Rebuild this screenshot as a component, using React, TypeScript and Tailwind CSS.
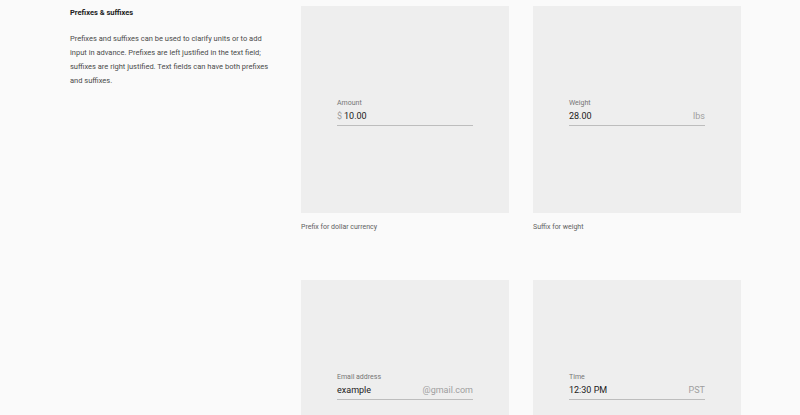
import React from "react";

type Field = {
  label: string;
  value: string;
  prefix?: string;
  suffix?: string;
  caption?: string;
};

const fields: Field[] = [
  { label: "Amount", value: "10.00", prefix: "$", caption: "Prefix for dollar currency" },
  { label: "Weight", value: "28.00", suffix: "lbs", caption: "Suffix for weight" },
  { label: "Email address", value: "example", suffix: "@gmail.com" },
  { label: "Time", value: "12:30 PM", suffix: "PST" },
];

function TextField({ field }: { field: Field }) {
  return (
    <div className="w-[136px]">
      <div className="text-[7px] leading-[8px] text-[#757575]">{field.label}</div>
      <div className="mt-[3px] flex items-baseline border-b border-[#bdbdbd] pb-[3px] text-[9px] leading-[12px]">
        {field.prefix && <span className="mr-[2px] text-[#9e9e9e]">{field.prefix}</span>}
        <span className="flex-1 text-[#212121]">{field.value}</span>
        {field.suffix && <span className="text-[#9e9e9e]">{field.suffix}</span>}
      </div>
    </div>
  );
}

export default function App() {
  return (
    <div
      className="min-h-[415px] bg-[#fafafa] pl-[70px] flex"
      style={{ fontFamily: "Roboto, 'Liberation Sans', sans-serif" }}
    >
      <div className="w-[200px] pt-[8px] mr-[31px]">
        <h3 className="text-[7.5px] font-bold leading-[10px] text-[#212121]">Prefixes &amp; suffixes</h3>
        <p className="mt-[14px] text-[7.5px] leading-[14px] text-[#4a4a4a]">
          Prefixes and suffixes can be used to clarify units or to add input in advance. Prefixes are left justified in the text field; suffixes are right justified. Text fields can have both prefixes and suffixes.
        </p>
      </div>
      <div className="grid grid-cols-[208px_208px] gap-x-[24px] gap-y-[0px] pt-[6px]">
        {fields.map((f) => (
          <div key={f.label} className="h-[274px]">
            <div className="h-[207px] bg-[#eeeeee] flex items-center justify-center pt-[6px]">
              <TextField field={f} />
            </div>
            {f.caption && (
              <div className="mt-[10px] text-[7px] leading-[9px] text-[#616161]">{f.caption}</div>
            )}
          </div>
        ))}
      </div>
    </div>
  );
}
